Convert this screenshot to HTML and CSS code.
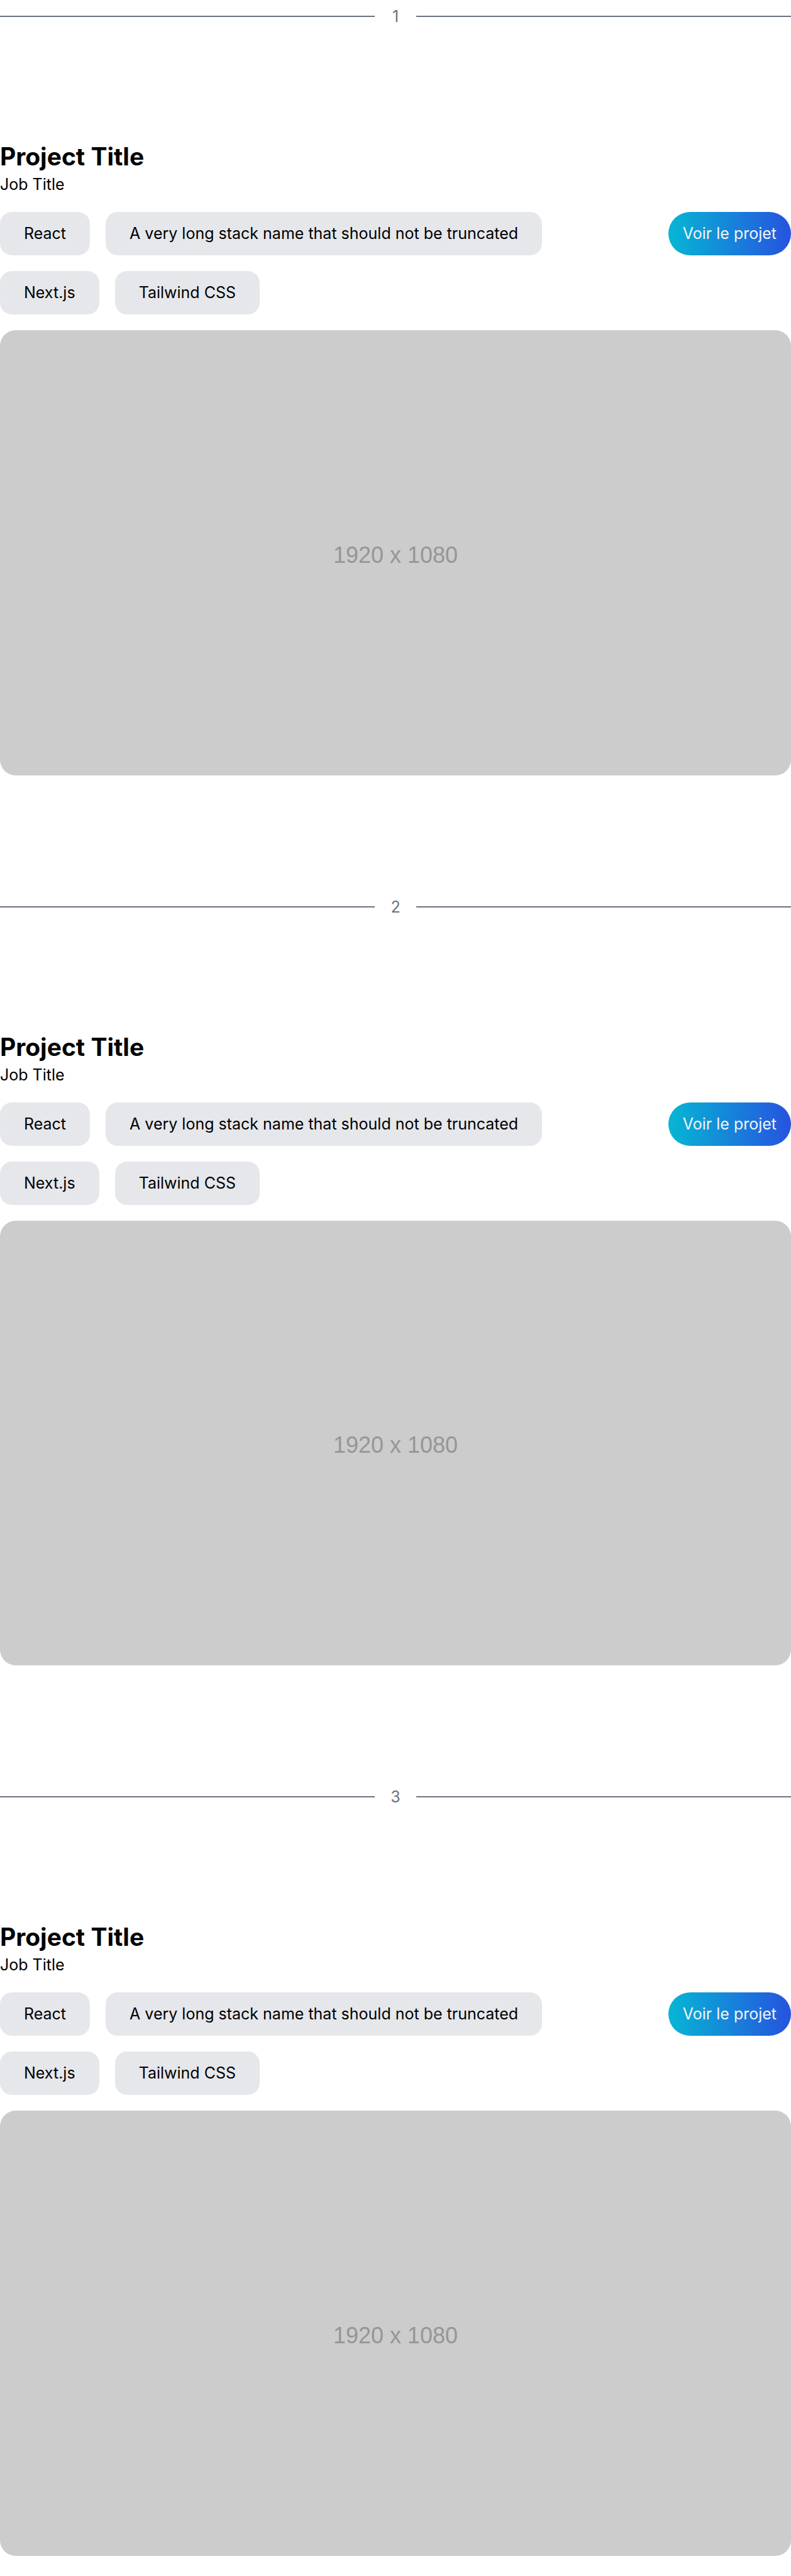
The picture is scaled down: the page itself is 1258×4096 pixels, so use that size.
FILE: index.html
```html
<!DOCTYPE html>
<html lang="fr">
<head>
<meta charset="utf-8">
<meta name="viewport" content="width=device-width, initial-scale=1">
<title>Projects</title>
<link rel="stylesheet" href="styles.css">
</head>
<body>
<main class="projects">
  <article class="project">
    <div class="divider"><span class="number">1</span></div>
    <header>
      <h2 class="project-title">Project Title</h2>
      <p class="job-title">Job Title</p>
    </header>
    <div class="details">
      <ul class="stack">
        <li class="chip">React</li>
        <li class="chip">A very long stack name that should not be truncated</li>
        <li class="chip">Next.js</li>
        <li class="chip">Tailwind CSS</li>
      </ul>
      <a class="project-link" href="#">Voir le projet</a>
    </div>
    <div class="preview">1920 x 1080</div>
  </article>
  <article class="project">
    <div class="divider"><span class="number">2</span></div>
    <header>
      <h2 class="project-title">Project Title</h2>
      <p class="job-title">Job Title</p>
    </header>
    <div class="details">
      <ul class="stack">
        <li class="chip">React</li>
        <li class="chip">A very long stack name that should not be truncated</li>
        <li class="chip">Next.js</li>
        <li class="chip">Tailwind CSS</li>
      </ul>
      <a class="project-link" href="#">Voir le projet</a>
    </div>
    <div class="preview">1920 x 1080</div>
  </article>
  <article class="project">
    <div class="divider"><span class="number">3</span></div>
    <header>
      <h2 class="project-title">Project Title</h2>
      <p class="job-title">Job Title</p>
    </header>
    <div class="details">
      <ul class="stack">
        <li class="chip">React</li>
        <li class="chip">A very long stack name that should not be truncated</li>
        <li class="chip">Next.js</li>
        <li class="chip">Tailwind CSS</li>
      </ul>
      <a class="project-link" href="#">Voir le projet</a>
    </div>
    <div class="preview">1920 x 1080</div>
  </article>
</main>
</body>
</html>
```
FILE: styles.css
```css
* {
  box-sizing: border-box;
  margin: 0;
  padding: 0;
}

body {
  background: #fff;
  color: #000;
  font-family: Inter, "Liberation Sans", sans-serif;
  font-size: 25px;
  line-height: 38px;
}

.projects {
  display: flex;
  flex-direction: column;
  gap: 183px;
  padding-bottom: 32px;
}

.project {
  display: flex;
  flex-direction: column;
  gap: 25px;
}

.divider {
  display: flex;
  align-items: center;
  gap: 25px;
  height: 52px;
  margin-bottom: 147px;
  color: #6b7280;
}

.divider::before,
.divider::after {
  content: "";
  flex: 1;
  height: 2px;
  background: #6b7280;
}

.number {
  min-width: 16px;
  text-align: center;
}

.project-title {
  font-size: 39px;
  font-weight: 700;
  line-height: 50px;
}

.details {
  display: flex;
  align-items: flex-start;
  justify-content: space-between;
  gap: 38px;
}

.stack {
  display: flex;
  flex-wrap: wrap;
  gap: 25px;
  list-style: none;
}

.chip {
  padding: 15px 38px 16px;
  border-radius: 19px;
  background: #e5e7eb;
}

.project-link {
  flex-shrink: 0;
  padding: 15px 23px 16px;
  border-radius: 35px;
  background: linear-gradient(to right, #06b6d4, #2653df);
  color: #f3f4f6;
  text-decoration: none;
}

.preview {
  display: flex;
  align-items: center;
  justify-content: center;
  aspect-ratio: 16 / 9;
  padding-top: 8px;
  border-radius: 25px;
  background: #ccc;
  color: #969696;
  font-family: "Liberation Sans", Arial, sans-serif;
  font-size: 36px;
}
```
